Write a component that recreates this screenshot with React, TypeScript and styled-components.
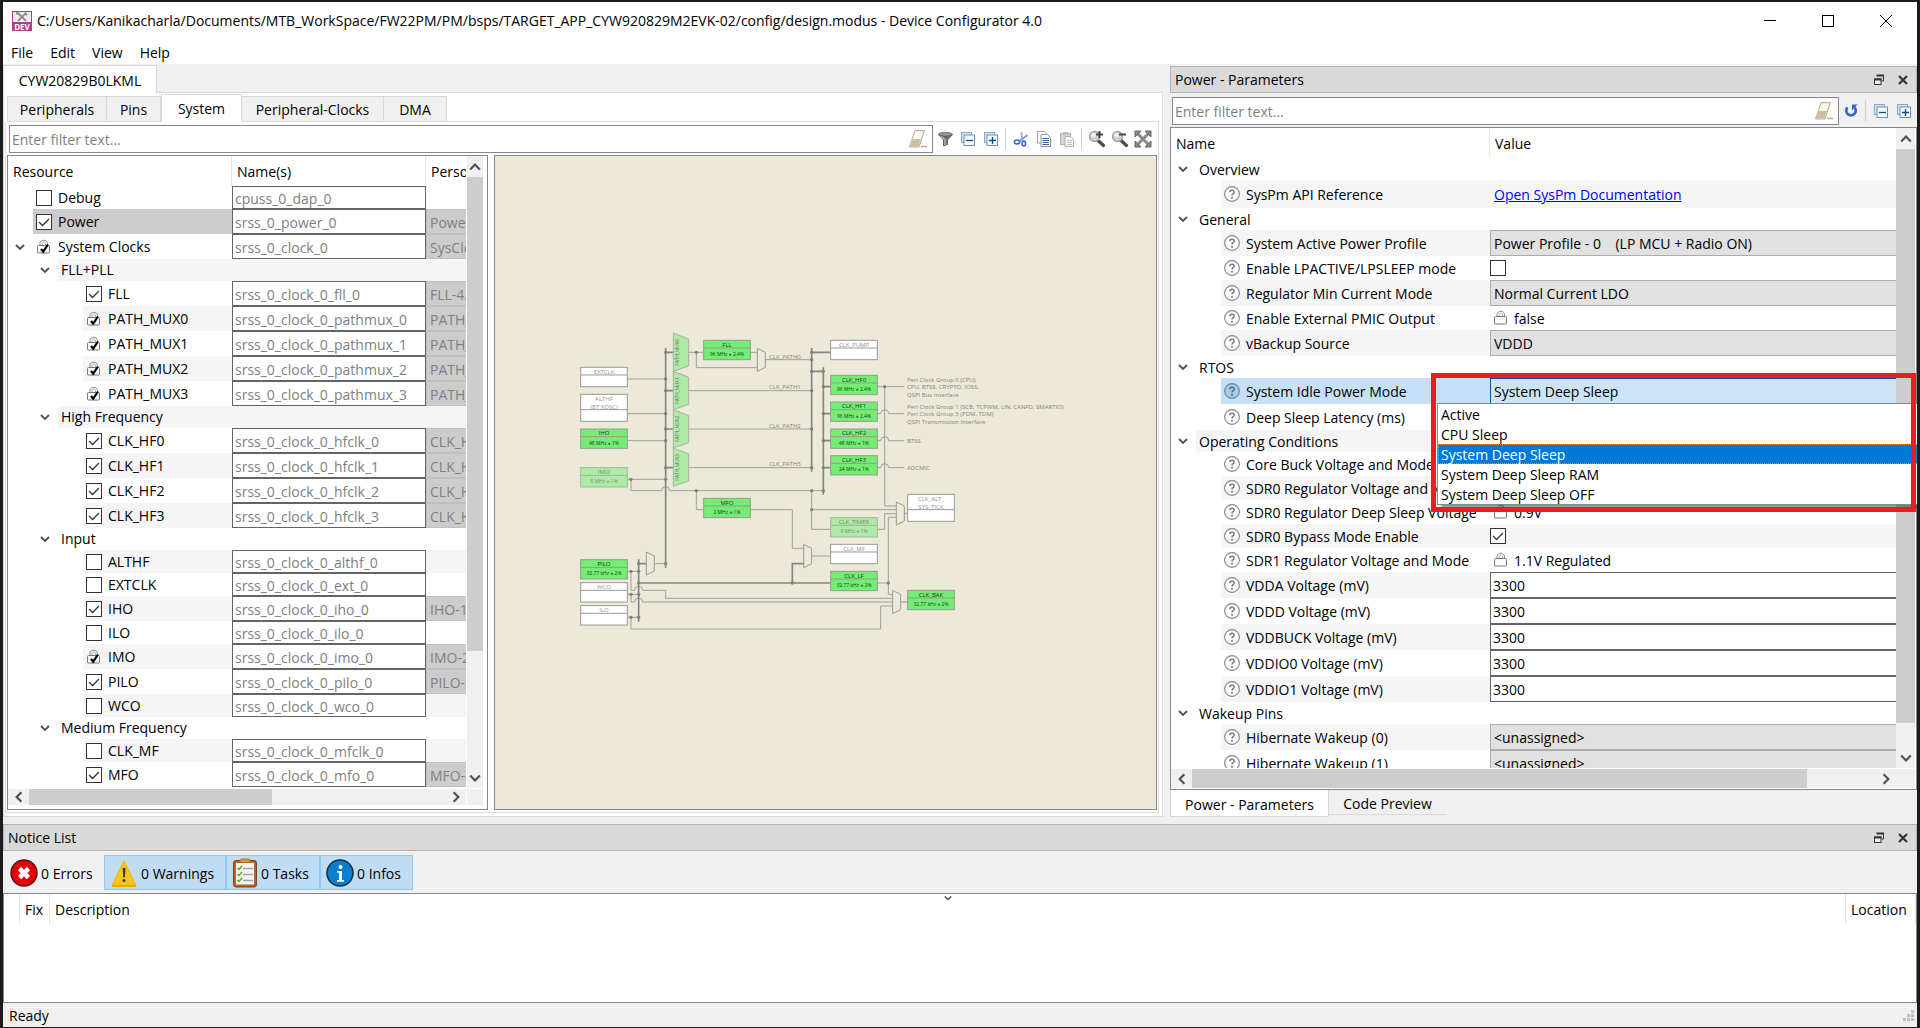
import React from "react";
import styled, { createGlobalStyle, css } from "styled-components";

const Global = createGlobalStyle`
  *, *::before, *::after { box-sizing: border-box; }
  body { margin: 0; background: #1b1b1b; }
  body, button, input, select {
    font-family: "Open Sans", "Noto Sans", sans-serif;
    font-size: 14px;
    line-height: 20px;
    color: #000;
  }
  button { background: none; border: 0; padding: 0; margin: 0; }
  ul { list-style: none; margin: 0; padding: 0; }
`;

const c = {
  face: "#f0f0f0",
  line: "#d9d9d9",
  frame: "#828790",
  title: "#d9d9d9",
  titleLine: "#b4b4b4",
  alt: "#f5f5f5",
  field: "#646464",
  thumb: "#cdcdcd",
};

/* ---------- window shell ---------- */

const Shell = styled.div`
  height: 100vh;
  display: flex;
  flex-direction: column;
  background: ${c.face};
  border: solid #1b1b1b;
  border-width: 2px 3px 1px;
  overflow: hidden;
`;

const TitleBar = styled.header`
  display: flex;
  align-items: center;
  height: 38px;
  padding: 0 2px 0 9px;
  background: #fff;
`;

const TitleText = styled.h1`
  flex: 1;
  margin: 0 0 0 5px;
  font-size: 14px;
  font-weight: 400;
  line-height: 20px;
  white-space: nowrap;
`;

const CaptionButton = styled.button`
  width: 58px;
  height: 36px;
  display: grid;
  place-items: center;
`;

const MenuBar = styled.nav`
  display: flex;
  height: 24px;
  gap: 17px;
  padding-left: 8px;
  background: #fff;
`;

const MenuButton = styled.button`
  height: 24px;
  padding-top: 2px;
`;

const Workspace = styled.main`
  flex: 1;
  min-height: 0;
  display: grid;
  grid-template-columns: minmax(0, 1160fr) minmax(0, 747fr);
  column-gap: 7px;
`;

/* ---------- left side ---------- */

const Column = styled.section`
  display: flex;
  flex-direction: column;
  min-height: 0;
  min-width: 0;
`;

const DeviceStrip = styled.div`
  display: flex;
  height: 29px;
  padding-top: 1px;
`;

const DeviceTab = styled.button`
  width: 154px;
  padding-top: 2px;
  background: #fff;
  border: solid ${c.line};
  border-width: 1px 1px 0 1px;
`;

const StripRule = styled.div`
  flex: 1;
  border-bottom: 1px solid ${c.line};
`;

const DevicePage = styled.div`
  flex: 1;
  min-height: 0;
  display: flex;
  flex-direction: column;
  padding: 1px 3px 3px 1px;
  background: #fff;
  border: solid ${c.line};
  border-width: 0 1px 1px;
`;

const TabStrip = styled.div`
  display: flex;
  align-items: flex-end;
  height: 28px;
  padding-left: 2px;
`;

const Tab = styled.button<{ $w: number; $active?: boolean }>`
  width: ${(p) => p.$w}px;
  height: ${(p) => (p.$active ? 28 : 26)}px;
  padding-top: 2px;
  background: ${(p) => (p.$active ? "#fff" : c.face)};
  border: 1px solid ${c.line};
  border-left-width: ${(p) => (p.$active ? 1 : 0)}px;
  ${(p) => p.$active && "border-bottom-color: #fff;"}
  &:first-child { border-left-width: 1px; }
`;

const Pane = styled.div`
  flex: 1;
  min-height: 0;
  display: flex;
  flex-direction: column;
  gap: 2px;
  padding: 3px 1px 2px;
  border: 1px solid ${c.line};
  border-top-width: 0;
`;

const ToolRow = styled.div`
  display: flex;
  align-items: center;
  height: 28px;
  padding: 0 3px 0 2px;
`;

const FilterBox = styled.div`
  flex: 1;
  display: flex;
  align-items: center;
  height: 28px;
  padding-right: 4px;
  background: #fff;
  border: 1px solid ${c.frame};
`;

const FilterInput = styled.input`
  flex: 1;
  border: 0;
  outline: 0;
  padding: 2px 2px 0;
  background: transparent;
  &::placeholder { color: #7f7f7f; opacity: 1; }
`;

const ToolButton = styled.button`
  width: 23px;
  height: 24px;
  display: grid;
  place-items: center;
`;

const ToolRule = styled.span`
  width: 1px;
  height: 22px;
  margin: 0 3px;
  background: #d0d0d0;
`;

const Split = styled.div`
  flex: 1;
  min-height: 0;
  display: grid;
  grid-template-columns: 481px minmax(0, 1fr);
  column-gap: 6px;
`;

const TreeFrame = styled.div`
  display: grid;
  grid-template: minmax(0, 1fr) 16px / minmax(0, 1fr) 16px;
  column-gap: 1px;
  row-gap: 1px;
  padding: 0 4px 4px 0;
  background: #fff;
  border: 1px solid ${c.frame};
  min-height: 0;
`;

const Viewport = styled.div`
  overflow: hidden;
  min-height: 0;
`;

const ScrollTrack = styled.div<{ $row?: boolean }>`
  display: flex;
  flex-direction: ${(p) => (p.$row ? "row" : "column")};
  background: ${c.face};
`;

const ScrollButton = styled.button`
  flex: 0 0 21px;
  display: grid;
  place-items: center;
`;

const Thumb = styled.div<{ $grow: number }>`
  flex: ${(p) => p.$grow};
  background: ${c.thumb};
`;

const TrackRest = styled.div<{ $grow: number }>`
  flex: ${(p) => p.$grow};
`;

const Corner = styled.div`
  background: ${c.face};
`;

/* ---------- shared tables ---------- */

const Grid = styled.table`
  width: 100%;
  table-layout: fixed;
  border-collapse: separate;
  border-spacing: 0;
  td, th { padding: 0; white-space: nowrap; overflow: hidden; }
`;

const HeadCell = styled.th<{ $h: number; $rule?: boolean }>`
  height: ${(p) => p.$h}px;
  && { padding: 2px 0 0 5px; }
  text-align: left;
  font-weight: 400;
  border-right: ${(p) => (p.$rule ? "1px solid #e5e5e5" : "0")};
`;

const BodyRow = styled.tr<{ $h: number }>`
  height: ${(p) => p.$h}px;
  td { height: ${(p) => p.$h}px; }
`;

const BodyCell = styled.td<{ $bg?: string }>`
  background: ${(p) => p.$bg ?? "transparent"};
  vertical-align: middle;
`;

const Branch = styled.div<{ $h: number; $depth: number }>`
  display: flex;
  height: ${(p) => p.$h}px;
  padding-left: ${(p) => p.$depth * 25}px;
`;

const Toggle = styled.button`
  width: 25px;
  padding-right: 2px;
  display: grid;
  place-items: center;
`;

const ItemLabel = styled.label<{ $bg?: string }>`
  flex: 1;
  display: flex;
  align-items: center;
  gap: 6px;
  padding-left: 3px;
  background: ${(p) => p.$bg ?? "transparent"};
`;

const ParamText = styled.span`
  padding-top: 2px;
`;

const tick = `url("data:image/svg+xml,%3Csvg xmlns='http://www.w3.org/2000/svg' width='14' height='14'%3E%3Cpath d='M2 7l3.5 3.5L12 4' fill='none' stroke='%23333' stroke-width='1.3'/%3E%3C/svg%3E")`;

const CheckBox = styled.input`
  appearance: none;
  flex: none;
  width: 16px;
  height: 16px;
  margin: 0;
  background: #fff;
  border: 1px solid #333;
  &:checked { background: #fff ${tick} center no-repeat; }
`;

const NameField = styled.input<{ $h: number }>`
  display: block;
  width: 100%;
  height: ${(p) => p.$h}px;
  padding: 2px 0 0 2px;
  border: 1px solid ${c.field};
  border-radius: 0;
  color: #808080;
  background: #fff;
`;

const Persona = styled.div<{ $h: number }>`
  height: ${(p) => p.$h}px;
  padding: 3px 0 0 3px;
  color: #808080;
  background: #ccc;
  border: solid #bfbfbf;
  border-width: 1px 0 1px 1px;
  overflow: hidden;
`;

const Canvas = styled.div`
  display: flex;
  align-items: center;
  justify-content: center;
  background: #ece9d8;
  border: 1px solid ${c.frame};
  overflow: hidden;
  min-height: 0;
`;

/* ---------- docks ---------- */

const Dock = styled(Column).attrs({ as: "aside" })`
  position: relative;
  padding-top: 2px;
`;

const DockTitle = styled.div`
  display: flex;
  align-items: center;
  height: 27px;
  flex: none;
  padding: 0 2px 0 4px;
  background: ${c.title};
  border: 1px solid ${c.titleLine};
`;

const DockName = styled.h2`
  flex: 1;
  margin: 0;
  padding-top: 1px;
  font-size: 14px;
  line-height: 20px;
  font-weight: 400;
`;

const DockButton = styled.button`
  width: 26px;
  height: 22px;
  display: grid;
  place-items: center;
  &:last-child { width: 22px; }
`;

const ParamTools = styled(ToolRow)`
  height: 34px;
  padding: 4px 2px 2px;
`;

const ParamFrame = styled.div`
  flex: 1;
  min-height: 0;
  display: grid;
  grid-template: minmax(0, 1fr) 19px / minmax(0, 1fr) 19px;
  row-gap: 1px;
  padding: 0 1px 1px 0;
  background: #fff;
  border: 1px solid ${c.frame};
`;

const ParamTabs = styled.div`
  display: flex;
  align-items: flex-start;
  height: 27px;
`;

const ParamTab = styled.button<{ $w: number; $active?: boolean }>`
  width: ${(p) => p.$w}px;
  height: ${(p) => (p.$active ? 27 : 25)}px;
  padding-top: 3px;
  background: ${(p) => (p.$active ? "#fff" : c.face)};
  border: solid ${c.line};
  border-width: ${(p) => (p.$active ? "0 1px 1px" : "0 0 1px")};
`;

const ValueSelect = styled.select<{ $active?: boolean }>`
  appearance: none;
  display: block;
  width: 100%;
  height: 26px;
  padding: 2px 0 0 3px;
  border: solid ${(p) => (p.$active ? "#005499" : "#adadad")};
  border-width: 1px 0 1px 1px;
  border-radius: 0;
  outline: 0;
  background: ${(p) => (p.$active ? "#cce4f7" : "#e1e1e1")};
`;

const ValueInput = styled.input`
  display: block;
  width: 100%;
  height: 26px;
  padding: 1px 0 0 2px;
  border: solid ${c.field};
  border-width: 1px 0 1px 1px;
  border-radius: 0;
`;

const ValueText = styled.output`
  display: flex;
  align-items: center;
  gap: 5px;
  padding-left: 3px;
`;

const DocLink = styled.a`
  display: inline-block;
  padding: 2px 0 0 4px;
  color: #00f;
  text-decoration: underline;
`;

const Popup = styled.ul`
  position: absolute;
  top: 339px;
  left: 267px;
  right: -3px;
  border: 1px solid ${c.frame};
  background: #fff;
  box-shadow: 4px 4px 3px rgba(0, 0, 0, 0.4);
`;

const PopupItem = styled.li<{ $active?: boolean }>`
  height: 20px;
  padding-left: 2px;
  border: 1px solid transparent;
  line-height: 20px;
  ${(p) =>
    p.$active &&
    css`
      color: #fff;
      background: #0078d7;
      border: 1px dotted #ff8728;
    `}
`;

const Highlight = styled.div`
  position: absolute;
  top: 309px;
  left: 261px;
  right: 1px;
  height: 139px;
  border: 5px solid #ed1c24;
  pointer-events: none;
`;

const NoticeDock = styled.section`
  flex: none;
  margin-top: 7px;
  display: flex;
  flex-direction: column;
`;

const NoticeTools = styled.div`
  display: flex;
  align-items: flex-start;
  height: 42px;
  padding: 4px 0 0 1px;
`;

const NoticeToggle = styled.button<{ $on?: boolean; $w: number }>`
  display: flex;
  align-items: center;
  gap: 3px;
  width: ${(p) => p.$w}px;
  height: 35px;
  padding-left: 5px;
  border: 1px solid ${(p) => (p.$on ? "#90c8f6" : "transparent")};
  background: ${(p) => (p.$on ? "#c0dcf3" : "transparent")};
`;

const NoticeLabel = styled.span`
  padding-top: 2px;
`;

const NoticeFrame = styled.div`
  height: 110px;
  background: #fff;
  border: 1px solid ${c.frame};
`;

const SortHead = styled(HeadCell)`
  position: relative;
`;

const SortMark = styled.span`
  position: absolute;
  top: 0;
  left: 50%;
  margin-left: -4px;
  display: grid;
  height: 8px;
  place-items: center;
`;

const StatusBar = styled.footer`
  display: flex;
  justify-content: space-between;
  align-items: center;
  height: 24px;
  padding: 1px 3px 0 6px;
  flex: none;
`;

/* ---------- icons ---------- */

const Chevron = ({ dir = "down", s = 10 }: { dir?: "down" | "up" | "left" | "right"; s?: number }) => {
  const turn = { down: 0, left: 90, up: 180, right: 270 }[dir];
  return (
    <svg width={s} height={s} viewBox="0 0 10 10" aria-hidden="true">
      <path d="M1 3l4 4 4-4" fill="none" stroke="#505050" strokeWidth="1.800" transform={`rotate(${turn} 5 5)`} />
    </svg>
  );
};

const DevIcon = () => (
  <svg width="20" height="20" viewBox="0 0 20 20" aria-hidden="true">
    <rect x="0.5" y="0.5" width="19" height="19" fill="#f3eef2" stroke="#b8398a" />
    <path d="M6 2l8 8M14 2l-8 8" stroke="#8d8d8d" strokeWidth="1.800" />
    <path d="M4 2l2 .5M5 3.500l1-2M13 2l2 2" stroke="#777" strokeWidth="1.500" />
    <rect y="11" width="20" height="9" fill="#b8398a" />
    <text x="10" y="18.500" textAnchor="middle" fontSize="8" fontWeight="700" fill="#fff" fontFamily="Open Sans">DEV</text>
  </svg>
);

const Eraser = () => (
  <svg width="20" height="20" viewBox="0 0 20 20" aria-hidden="true">
    <path d="M7 1.500h9.500L11 18H1.500z" fill="#e9dfd0" stroke="#c0ae98" />
    <path d="M7.500 2.500h7.600l-2.600 7.500H5z" fill="#faf6f0" />
    <path d="M4.500 10h8L10.500 17H2.500z" fill="#cdbca6" />
    <path d="M13 17.500h6" stroke="#c0ae98" strokeWidth="1.500" />
  </svg>
);

const Funnel = () => (
  <svg width="16" height="16" viewBox="0 0 16 16" aria-hidden="true">
    <path d="M1.500 3.500L6.500 9v6l4-1.500V9l5-5.500z" fill="#6c6c6c" stroke="#484848" strokeWidth=".7" />
    <path d="M4 5l4 4v5" fill="none" stroke="#b5b5b5" strokeWidth="1.500" />
    <ellipse cx="8.300" cy="3.200" rx="6.800" ry="1.800" fill="#999" stroke="#5a5a5a" strokeWidth=".8" />
  </svg>
);

const Squares = ({ plus }: { plus?: boolean }) => (
  <svg width="16" height="16" viewBox="0 0 16 16" aria-hidden="true">
    <rect x="1.500" y="1.500" width="10" height="10" fill="#cfe3f5" stroke="#82abd2" />
    <rect x="4" y="4" width="10.500" height="10.500" fill="#f5faff" stroke="#6f8fb8" />
    <path d={plus ? "M6 9.500h7M9.500 6v7" : "M6 9.500h7"} stroke="#0a4a94" strokeWidth="1.300" />
  </svg>
);

const Cut = () => (
  <svg width="16" height="16" viewBox="0 0 16 16" aria-hidden="true">
    <path d="M8.500 1l.6 8.500" stroke="#9db4d2" strokeWidth="1.800" />
    <path d="M14.500 4L6 10.500" stroke="#7f9cc6" strokeWidth="1.800" />
    <ellipse cx="4" cy="11" rx="2.600" ry="1.900" fill="none" stroke="#2f66c6" strokeWidth="1.500" />
    <ellipse cx="10.800" cy="12.500" rx="1.700" ry="2.500" fill="none" stroke="#2f66c6" strokeWidth="1.500" />
  </svg>
);

const Copy = () => (
  <svg width="16" height="16" viewBox="0 0 16 16" aria-hidden="true">
    <path d="M1.500 .5h7l2 2v9.500h-9z" fill="#fff" stroke="#a5a5a5" />
    <path d="M5 3.500h6.500l3 3v9H5z" fill="#fff" stroke="#959595" />
    <path d="M6.500 7.500h6.500M6.500 9.500h6.500M6.500 11.500h6.500M6.500 13.500h6.500" stroke="#3a5cab" />
  </svg>
);

const Paste = () => (
  <svg width="16" height="16" viewBox="0 0 16 16" aria-hidden="true">
    <rect x="1.500" y="2.500" width="10" height="11" fill="#d5d5d5" stroke="#b0b0b0" />
    <rect x="4" y="1" width="5" height="3" fill="#bdbdbd" />
    <path d="M6 5.500h5.500l3 3v7H6z" fill="#f6f6f6" stroke="#b0b0b0" />
    <path d="M8 9.500h5M8 11.500h5M8 13.500h5" stroke="#c2c2c2" />
  </svg>
);

const Magnifier = ({ plus }: { plus?: boolean }) => (
  <svg width="18" height="18" viewBox="0 0 18 18" aria-hidden="true">
    <path d="M9.500 10l6 5.500" stroke="#4a4a4a" strokeWidth="3.200" strokeLinecap="round" />
    <circle cx="6.500" cy="6.500" r="5" fill="#cfcfcf" stroke="#a2a2a2" strokeWidth="1.300" />
    <circle cx="5.500" cy="5" r="2.300" fill="#f0f0f0" />
    <path d={plus ? "M8 4.500h7M11.500 1v7" : "M8 4.500h7"} stroke="#444" strokeWidth="2" />
  </svg>
);

const Fit = () => (
  <svg width="18" height="18" viewBox="0 0 18 18" aria-hidden="true">
    <path d="M3 3l12 12M15 3L3 15" stroke="#8a8a8a" strokeWidth="3" />
    <path d="M1 1h6L1 7zM17 1v6L11 1zM1 17v-6l6 6zM17 17h-6l6-6z" fill="#8a8a8a" stroke="#666" />
  </svg>
);

const Refresh = () => (
  <svg width="16" height="16" viewBox="0 0 16 16" aria-hidden="true">
    <path d="M4.500 4.500a4.700 4.700 0 1 0 7 0" fill="none" stroke="#3468c8" strokeWidth="2.800" />
    <path d="M9 1.500h5.500L9 7.500z" fill="#3468c8" />
  </svg>
);

const Float = () => (
  <svg width="12" height="12" viewBox="0 0 12 12" aria-hidden="true">
    <path d="M4 1.500h6.500V7H8.500" fill="none" stroke="#333" />
    <path d="M3.500 1.500h7.500" stroke="#333" strokeWidth="2" />
    <rect x="1.500" y="5" width="6.500" height="5.500" fill="#eee" stroke="#333" />
    <path d="M1 5.500h7.500" stroke="#333" strokeWidth="2" />
  </svg>
);

const Cross = () => (
  <svg width="12" height="12" viewBox="0 0 12 12" aria-hidden="true">
    <path d="M2 2l8 8M10 2L2 10" stroke="#333" strokeWidth="2.200" />
  </svg>
);

const Lock = ({ ticked }: { ticked?: boolean }) => (
  <svg width="16" height="16" viewBox="0 0 16 16" aria-hidden="true">
    <path d="M4 6.500V4.500C4 .2 11.500 .2 11.500 4.500V6.500" fill="none" stroke="#8a8a8a" />
    <path d="M6 6.500V4.800c0-2.400 3.500-2.400 3.500 0v1.700" fill="none" stroke="#aaa" />
    <rect x="1.500" y="6.500" width="12" height="7.500" rx="1" fill="#fcfcfc" stroke="#777" />
    {ticked && <path d="M5 10l2.200 2.700L12 5.500" fill="none" stroke="#000" strokeWidth="2.200" />}
  </svg>
);

const Help = ({ active }: { active?: boolean }) => (
  <svg width="16" height="16" viewBox="0 0 16 16" aria-hidden="true">
    <circle cx="8" cy="8" r="7.400" fill={active ? "#a9cbe8" : "#fff"} stroke={active ? "#5f87a8" : "#858585"} strokeWidth="1.100" />
    <path d="M5.800 6.300C5.900 3.600 10.200 3.700 10.200 6.200 10.200 7.700 8 7.700 8 9.400" fill="none" stroke={active ? "#41698c" : "#777"} strokeWidth="1.500" />
    <circle cx="8" cy="11.700" r="1" fill={active ? "#41698c" : "#777"} />
  </svg>
);

const ErrorIcon = () => (
  <svg width="28" height="28" viewBox="0 0 28 28" aria-hidden="true">
    <circle cx="14" cy="14" r="13" fill="#e3000b" stroke="#5b1010" strokeWidth="1.400" />
    <path d="M9.500 9.500l9 9M18.500 9.500l-9 9" stroke="#fff" strokeWidth="4.600" />
  </svg>
);

const WarningIcon = () => (
  <svg width="28" height="30" viewBox="0 0 28 30" aria-hidden="true">
    <path d="M14 2.500L26 27q.5 1.500-1 1.500H3q-1.500 0-1-1.500z" fill="#f5c518" stroke="#f0b90b" strokeLinejoin="round" />
    <path d="M2 27h24v1.500H2z" fill="#e79b12" />
    <path d="M12.700 10h2.800l-.6 9.500h-1.600z" fill="#3c3c3c" />
    <circle cx="14" cy="22.500" r="1.500" fill="#3c3c3c" />
  </svg>
);

const TaskIcon = () => (
  <svg width="26" height="30" viewBox="0 0 26 30" aria-hidden="true">
    <rect x="1.500" y="2.500" width="23" height="26.500" rx="2.500" fill="#b5652b" stroke="#7d4218" />
    <rect x="4" y="5" width="18" height="21.500" fill="#f4f4f2" />
    <rect x="8" y="1" width="10" height="3.500" rx="1.500" fill="#e0953e" stroke="#9a5a20" strokeWidth=".7" />
    <path d="M5.500 10l1.500 1.500L10 8M5.500 16l1.500 1.500L10 14M5.500 22l1.500 1.500L10 20" fill="none" stroke="#5aa52a" strokeWidth="1.500" />
    <path d="M11 10.500h10M11 16.500h10M11 22.500h10" stroke="#a5a5a5" strokeWidth="1.500" />
  </svg>
);

const InfoIcon = () => (
  <svg width="28" height="28" viewBox="0 0 28 28" aria-hidden="true">
    <circle cx="14" cy="14" r="13" fill="#0a7fcb" stroke="#12324a" strokeWidth="1.600" />
    <circle cx="14.500" cy="8" r="2" fill="#fff" />
    <path d="M11 12h5v9h2v1.800h-7V21h2v-7.200h-2z" fill="#fff" />
  </svg>
);

const Grip = () => (
  <svg width="11" height="11" viewBox="0 0 11 11" aria-hidden="true">
    <path d="M8 0h3v3H8zM8 4h3v3H8zM4 4h3v3H4zM8 8h3v3H8zM4 8h3v3H4zM0 8h3v3H0z" fill="#bfbfbf" />
  </svg>
);

/* ---------- clock diagram ---------- */

type Block = { x: number; y: number; name: string[]; freq?: string; dim?: boolean };

const blocks: Block[] = [
  { x: 62, y: 142, name: ["EXTCLK"] },
  { x: 62, y: 223, name: ["ALTHF", "(BT XOSC)"] },
  { x: 62, y: 327, name: ["IHO"], freq: "48 MHz ± 1%" },
  { x: 62, y: 443, name: ["IMO"], freq: "8 MHz ± 1%", dim: true },
  { x: 62, y: 719, name: ["PILO"], freq: "32.77 kHz ± 2%" },
  { x: 62, y: 788, name: ["WCO"] },
  { x: 62, y: 857, name: ["ILO"] },
  { x: 431, y: 61, name: ["FLL"], freq: "96 MHz ± 2.4%" },
  { x: 431, y: 535, name: ["MFO"], freq: "2 MHz ± 1%" },
  { x: 812, y: 61, name: ["CLK_PUMP"] },
  { x: 812, y: 166, name: ["CLK_HF0"], freq: "96 MHz ± 2.4%" },
  { x: 812, y: 246, name: ["CLK_HF1"], freq: "96 MHz ± 2.4%" },
  { x: 812, y: 327, name: ["CLK_HF2"], freq: "48 MHz ± 1%" },
  { x: 812, y: 407, name: ["CLK_HF3"], freq: "24 MHz ± 1%" },
  { x: 812, y: 593, name: ["CLK_TIMER"], freq: "8 MHz ± 1%", dim: true },
  { x: 812, y: 673, name: ["CLK_MF"] },
  { x: 812, y: 754, name: ["CLK_LF"], freq: "32.77 kHz ± 2%" },
  { x: 1043, y: 523, name: ["CLK_ALT_", "SYS_TICK"] },
  { x: 1043, y: 811, name: ["CLK_BAK"], freq: "32.77 kHz ± 2%" },
];

const thinWires = [
  "M202 177H317M202 281H317M202 362H317M202 478H317",
  "M213 478V512H305A12 12 0 0 1 329 512H790M409 512V569H431M571 569H697V685H732M755 708H812",
  "M386 97H431M409 97V143H592M571 97H592M617 119H755M386 212H755M386 327H755M386 443H755",
  "M952 200H1033M974 200V558H1009",
  "M952 281H962A12 12 0 0 1 986 281H1033M952 362H962A12 12 0 0 1 986 362H1033M952 443H962A12 12 0 0 1 986 443H1033",
  "M755 512V628H812M755 569H1009M952 628H974V581H1009M1009 592H985V823H998M952 789H985M1033 580H1043M1021 846H1043",
  "M202 754H236M213 754V811H224A12 12 0 0 1 248 811H317V835H998",
  "M202 823H236M213 823V846H224A12 12 0 0 1 248 846H998",
  "M202 892H236M213 892V927H962V858H998M284 731H317",
].join("");

const thickWires =
  "M317 84V743M236 718V905M755 84V455M790 142V524M317 97H340M317 212H340M317 327H340M317 443H340M755 97H812M755 154H790M790 200H812M790 281H812M790 362H812M790 443H812M236 789H812M697 789V731H732M236 731H259";

const joints: [number, number][] = [
  [317, 97], [317, 177], [317, 212], [317, 281], [317, 327], [317, 362], [317, 443], [317, 478], [317, 731],
  [213, 478], [409, 97], [409, 512], [755, 97], [755, 119], [755, 154], [755, 212], [755, 327], [755, 443],
  [790, 154], [790, 200], [790, 281], [790, 362], [790, 443], [790, 512], [755, 512], [755, 569], [974, 200],
  [697, 789], [985, 789], [213, 754], [236, 754], [213, 823], [236, 823], [213, 892], [236, 892], [236, 731], [236, 789],
];

const muxes: [number, number, number][] = [
  [592, 85, 69],
  [731, 673, 70],
  [1009, 546, 69],
  [998, 811, 70],
  [259, 696, 69],
];

const notes: [number, number, string][] = [
  [627, 116, "CLK_PATH0"],
  [627, 207, "CLK_PATH1"],
  [627, 323, "CLK_PATH2"],
  [627, 438, "CLK_PATH3"],
  [1041, 186, "Peri Clock Group 0 (CPU)"],
  [1041, 207, "CPU, BTSS, CRYPTO, IOSS,"],
  [1041, 231, "QSPI Bus Interface"],
  [1041, 266, "Peri Clock Group 1 (SCB, TCPWM, LIN, CANFD, SMARTIO)"],
  [1041, 288, "Peri Clock Group 3 (PDM, TDM)"],
  [1041, 312, "QSPI Transmission Interface"],
  [1041, 368, "BTSS"],
  [1041, 449, "ADCMIC"],
];

const DiagramSvg = styled.svg`
  flex: none;
  font-family: "Open Sans", sans-serif;
  font-size: 18px;
`;

const ClockDiagram = () => (
  <DiagramSvg width="520" height="320" viewBox="18 9 1560 960" role="img" aria-label="Clock diagram">
    <path d={thinWires} fill="none" stroke="#a09f98" strokeWidth="3" />
    <path d={thickWires} fill="none" stroke="#858585" strokeWidth="5" />
    {joints.map(([x, y]) => (
      <circle key={`${x}-${y}`} cx={x} cy={y} r="5" fill="#808080" />
    ))}
    {muxes.map(([x, y, h]) => (
      <path
        key={`${x}-${y}`}
        d={`M${x} ${y}l24 12V${y + h - 12}L${x} ${y + h}z`}
        fill="#ece9d8"
        stroke="#9a9a96"
        strokeWidth="3"
      />
    ))}
    {[0, 1, 2, 3].map((i) => (
      <g key={i} transform={`translate(340 ${39 + i * 115})`}>
        <path d="M0 0l46 18v81L0 115z" fill="#aeeba6" stroke="#a3b59e" strokeWidth="3" />
        <text transform="translate(17 58) rotate(-90)" textAnchor="middle" fontSize="14" fill="#5f705c">
          {`PATH_MUX${i}`}
        </text>
      </g>
    ))}
    {blocks.map((b) => {
      const two = b.name.length > 1;
      const h = two ? 81 : 58;
      const top = two ? 46 : 23;
      const fill = b.dim ? "#aeeba6" : b.freq ? "#73ee73" : "#fff";
      const ink = b.dim ? "#748f70" : b.freq ? "#163a16" : "#969090";
      return (
        <g key={b.name[0]} transform={`translate(${b.x} ${b.y})`}>
          <rect width="140" height={h} fill={fill} stroke={b.dim ? "#a3b59e" : "#999"} strokeWidth="3" />
          <path d={`M0 ${top}h140`} stroke={b.dim ? "#a3b59e" : "#999"} strokeWidth="3" />
          {b.name.map((line, i) => (
            <text key={line} x="70" y={19 + i * 24} textAnchor="middle" fill={ink}>
              {line}
            </text>
          ))}
          {b.freq && (
            <text x="70" y="47" textAnchor="middle" fontSize="15" fill={ink}>
              {b.freq}
            </text>
          )}
        </g>
      );
    })}
    {notes.map(([x, y, t]) => (
      <text key={t} x={x} y={y} fill="#83827c">
        {t}
      </text>
    ))}
  </DiagramSvg>
);

/* ---------- resource tree ---------- */

type Res = {
  depth: number;
  label: string;
  kind: "check" | "lock" | "group";
  on?: boolean;
  open?: boolean;
  name?: string;
  persona?: string;
  shade?: boolean;
  selected?: boolean;
};

const leaf = (label: string, name: string, persona: string, shade: boolean, kind: Res["kind"] = "check"): Res => ({
  depth: 2,
  label,
  kind,
  on: persona !== "",
  name: `srss_0_clock_0_${name}`,
  persona,
  shade,
});

const group = (label: string, shade: boolean): Res => ({ depth: 1, label, kind: "group", open: true, shade });

const resources: Res[] = [
  { depth: 0, label: "Debug", kind: "check", name: "cpuss_0_dap_0" },
  { depth: 0, label: "Power", kind: "check", on: true, name: "srss_0_power_0", persona: "Power-1.4", selected: true },
  { depth: 0, label: "System Clocks", kind: "lock", open: true, name: "srss_0_clock_0", persona: "SysClocks-4.0" },
  group("FLL+PLL", true),
  leaf("FLL", "fll_0", "FLL-4.0", false),
  leaf("PATH_MUX0", "pathmux_0", "PATH_MUX-4.0", true, "lock"),
  leaf("PATH_MUX1", "pathmux_1", "PATH_MUX-4.0", false, "lock"),
  leaf("PATH_MUX2", "pathmux_2", "PATH_MUX-4.0", true, "lock"),
  leaf("PATH_MUX3", "pathmux_3", "PATH_MUX-4.0", false, "lock"),
  group("High Frequency", true),
  leaf("CLK_HF0", "hfclk_0", "CLK_HF-4.0", false),
  leaf("CLK_HF1", "hfclk_1", "CLK_HF-4.0", true),
  leaf("CLK_HF2", "hfclk_2", "CLK_HF-4.0", false),
  leaf("CLK_HF3", "hfclk_3", "CLK_HF-4.0", true),
  group("Input", false),
  leaf("ALTHF", "althf_0", "", true),
  leaf("EXTCLK", "ext_0", "", false),
  leaf("IHO", "iho_0", "IHO-1.0", true),
  leaf("ILO", "ilo_0", "", false),
  leaf("IMO", "imo_0", "IMO-2.0", true, "lock"),
  leaf("PILO", "pilo_0", "PILO-3.0", false),
  leaf("WCO", "wco_0", "", true),
  group("Medium Frequency", false),
  leaf("CLK_MF", "mfclk_0", "", true),
  leaf("MFO", "mfo_0", "MFO-1.0", false),
];

const ResourceRow = ({ r }: { r: Res }) => {
  const h = r.kind === "group" ? 22 : r.persona ? 25 : 23;
  const bg = r.selected ? "#cdcdcd" : r.shade ? c.alt : undefined;
  const label = (
    <Branch $h={h} $depth={r.depth}>
      {r.open ? (
        <Toggle aria-label={`Collapse ${r.label}`}>
          <Chevron />
        </Toggle>
      ) : (
        <Toggle as="span" />
      )}
      <ItemLabel $bg={bg} as={r.kind === "check" ? "label" : "div"}>
        {r.kind === "check" && <CheckBox type="checkbox" defaultChecked={r.on} />}
        {r.kind === "lock" && <Lock ticked />}
        <span>{r.label}</span>
      </ItemLabel>
    </Branch>
  );
  if (r.kind === "group")
    return (
      <BodyRow $h={h}>
        <BodyCell>{label}</BodyCell>
        <BodyCell colSpan={2} $bg={bg} />
      </BodyRow>
    );
  return (
    <BodyRow $h={h}>
      <BodyCell>{label}</BodyCell>
      <BodyCell>
        <NameField $h={h} aria-label={`${r.label} name`} defaultValue={r.name} />
      </BodyCell>
      <BodyCell $bg={r.selected ? undefined : bg}>{r.persona && <Persona $h={h}>{r.persona}</Persona>}</BodyCell>
    </BodyRow>
  );
};

/* ---------- parameters ---------- */

type Param = {
  label: string;
  kind: "group" | "link" | "select" | "check" | "fixed" | "text";
  value?: string;
  on?: boolean;
  h: number;
  active?: boolean;
};

const params: Param[] = [
  { label: "Overview", kind: "group", h: 23 },
  { label: "SysPm API Reference", kind: "link", value: "Open SysPm Documentation", h: 28 },
  { label: "General", kind: "group", h: 22 },
  { label: "System Active Power Profile", kind: "select", value: "Power Profile - 0\u00a0\u00a0\u00a0\u00a0(LP MCU + Radio ON)", h: 26 },
  { label: "Enable LPACTIVE/LPSLEEP mode", kind: "check", h: 24 },
  { label: "Regulator Min Current Mode", kind: "select", value: "Normal Current LDO", h: 26 },
  { label: "Enable External PMIC Output", kind: "fixed", value: "false", h: 24 },
  { label: "vBackup Source", kind: "select", value: "VDDD", h: 26 },
  { label: "RTOS", kind: "group", h: 22 },
  { label: "System Idle Power Mode", kind: "select", value: "System Deep Sleep", h: 26, active: true },
  { label: "Deep Sleep Latency (ms)", kind: "text", value: "0", h: 26 },
  { label: "Operating Conditions", kind: "group", h: 22 },
  { label: "Core Buck Voltage and Mode", kind: "fixed", value: "", h: 24 },
  { label: "SDR0 Regulator Voltage and Mode", kind: "fixed", value: "", h: 24 },
  { label: "SDR0 Regulator Deep Sleep Voltage", kind: "fixed", value: "0.9V", h: 24 },
  { label: "SDR0 Bypass Mode Enable", kind: "check", on: true, h: 24 },
  { label: "SDR1 Regulator Voltage and Mode", kind: "fixed", value: "1.1V Regulated", h: 24 },
  { label: "VDDA Voltage (mV)", kind: "text", value: "3300", h: 26 },
  { label: "VDDD Voltage (mV)", kind: "text", value: "3300", h: 26 },
  { label: "VDDBUCK Voltage (mV)", kind: "text", value: "3300", h: 26 },
  { label: "VDDIO0 Voltage (mV)", kind: "text", value: "3300", h: 26 },
  { label: "VDDIO1 Voltage (mV)", kind: "text", value: "3300", h: 26 },
  { label: "Wakeup Pins", kind: "group", h: 22 },
  { label: "Hibernate Wakeup (0)", kind: "select", value: "<unassigned>", h: 26 },
  { label: "Hibernate Wakeup (1)", kind: "select", value: "<unassigned>", h: 26 },
];

const shadedParams = new Set([1, 3, 5, 7, 11, 13, 15, 17, 19, 21, 23]);

const ValueCheck = styled(CheckBox)`
  align-self: center;
`;

const ParamRow = ({ p, i }: { p: Param; i: number }) => {
  const bg = p.active ? "#c5e0f7" : shadedParams.has(i) ? c.alt : undefined;
  const id = `param-${i}`;
  if (p.kind === "group")
    return (
      <BodyRow $h={p.h}>
        <BodyCell>
          <Branch $h={p.h} $depth={0}>
            <Toggle aria-label={`Collapse ${p.label}`}>
              <Chevron />
            </Toggle>
            <ItemLabel as="div" $bg={bg}>
              <ParamText>{p.label}</ParamText>
            </ItemLabel>
          </Branch>
        </BodyCell>
        <BodyCell $bg={bg} />
      </BodyRow>
    );
  return (
    <BodyRow $h={p.h}>
      <BodyCell>
        <Branch $h={p.h} $depth={1}>
          <Toggle as="span" />
          <ItemLabel $bg={bg} htmlFor={id}>
            <Help active={p.active} />
            <ParamText>{p.label}</ParamText>
          </ItemLabel>
        </Branch>
      </BodyCell>
      <BodyCell $bg={bg}>
        {p.kind === "select" && (
          <ValueSelect id={id} $active={p.active}>
            <option>{p.value}</option>
          </ValueSelect>
        )}
        {p.kind === "text" && <ValueInput id={id} defaultValue={p.value} />}
        {p.kind === "link" && <DocLink id={id} href="#syspm">{p.value}</DocLink>}
        {p.kind === "check" && (
          <Branch $h={p.h} $depth={0}>
            <ValueCheck id={id} type="checkbox" defaultChecked={p.on} />
          </Branch>
        )}
        {p.kind === "fixed" && (
          <ValueText id={id}>
            <Lock />
            <ParamText>{p.value}</ParamText>
          </ValueText>
        )}
      </BodyCell>
    </BodyRow>
  );
};

const ScrollBar = ({ row, thumb, rest }: { row?: boolean; thumb: number; rest: number }) => (
  <ScrollTrack $row={row}>
    <ScrollButton aria-label="Scroll back">
      <Chevron dir={row ? "left" : "up"} s={12} />
    </ScrollButton>
    <Thumb $grow={thumb} />
    <TrackRest $grow={rest} />
    <ScrollButton aria-label="Scroll forward">
      <Chevron dir={row ? "right" : "down"} s={12} />
    </ScrollButton>
  </ScrollTrack>
);

const DockHeader = ({ name }: { name: string }) => (
  <DockTitle>
    <DockName>{name}</DockName>
    <DockButton aria-label="Float">
      <Float />
    </DockButton>
    <DockButton aria-label="Close panel">
      <Cross />
    </DockButton>
  </DockTitle>
);

const modes = ["Active", "CPU Sleep", "System Deep Sleep", "System Deep Sleep RAM", "System Deep Sleep OFF"];

export default function App() {
  return (
    <Shell>
      <Global />
      <TitleBar>
        <DevIcon />
        <TitleText>
          C:/Users/Kanikacharla/Documents/MTB_WorkSpace/FW22PM/PM/bsps/TARGET_APP_CYW920829M2EVK-02/config/design.modus - Device Configurator 4.0
        </TitleText>
        <CaptionButton aria-label="Minimize">
          <svg width="12" height="12"><path d="M0 5.500h12" stroke="#000" /></svg>
        </CaptionButton>
        <CaptionButton aria-label="Maximize">
          <svg width="12" height="12"><rect x=".5" y=".5" width="11" height="11" fill="none" stroke="#000" /></svg>
        </CaptionButton>
        <CaptionButton aria-label="Close">
          <svg width="12" height="12"><path d="M0 0l12 12M12 0L0 12" stroke="#000" /></svg>
        </CaptionButton>
      </TitleBar>
      <MenuBar>
        {["File", "Edit", "View", "Help"].map((m) => (
          <MenuButton key={m}>{m}</MenuButton>
        ))}
      </MenuBar>

      <Workspace>
        <Column>
          <DeviceStrip>
            <DeviceTab>CYW20829B0LKML</DeviceTab>
            <StripRule />
          </DeviceStrip>
          <DevicePage>
            <TabStrip>
              <Tab $w={100}>Peripherals</Tab>
              <Tab $w={54}>Pins</Tab>
              <Tab $w={81} $active>System</Tab>
              <Tab $w={142}>Peripheral-Clocks</Tab>
              <Tab $w={63}>DMA</Tab>
              <StripRule />
            </TabStrip>
            <Pane>
              <ToolRow>
                <FilterBox>
                  <FilterInput aria-label="Filter resources" placeholder="Enter filter text..." />
                  <Eraser />
                </FilterBox>
                <ToolButton aria-label="Filter"><Funnel /></ToolButton>
                <ToolButton aria-label="Collapse all"><Squares /></ToolButton>
                <ToolButton aria-label="Expand all"><Squares plus /></ToolButton>
                <ToolRule />
                <ToolButton aria-label="Cut"><Cut /></ToolButton>
                <ToolButton aria-label="Copy"><Copy /></ToolButton>
                <ToolButton aria-label="Paste"><Paste /></ToolButton>
                <ToolRule />
                <ToolButton aria-label="Zoom in"><Magnifier plus /></ToolButton>
                <ToolButton aria-label="Zoom out"><Magnifier /></ToolButton>
                <ToolButton aria-label="Zoom to fit"><Fit /></ToolButton>
              </ToolRow>
              <Split>
                <TreeFrame>
                  <Viewport>
                    <Grid>
                      <colgroup>
                        <col style={{ width: 224 }} />
                        <col style={{ width: 194 }} />
                        <col />
                      </colgroup>
                      <thead>
                        <tr>
                          <HeadCell $h={30} $rule>Resource</HeadCell>
                          <HeadCell $h={30} $rule>Name(s)</HeadCell>
                          <HeadCell $h={30}>Personality</HeadCell>
                        </tr>
                      </thead>
                      <tbody>
                        {resources.map((r) => (
                          <ResourceRow key={r.label} r={r} />
                        ))}
                      </tbody>
                    </Grid>
                  </Viewport>
                  <ScrollBar thumb={475} rest={116} />
                  <ScrollBar row thumb={244} rest={173} />
                  <Corner />
                </TreeFrame>
                <Canvas>
                  <ClockDiagram />
                </Canvas>
              </Split>
            </Pane>
          </DevicePage>
        </Column>

        <Dock>
          <DockHeader name="Power - Parameters" />
          <ParamTools>
            <FilterBox>
              <FilterInput aria-label="Filter parameters" placeholder="Enter filter text..." />
              <Eraser />
            </FilterBox>
            <ToolButton aria-label="Reset"><Refresh /></ToolButton>
            <ToolRule />
            <ToolButton aria-label="Collapse all"><Squares /></ToolButton>
            <ToolButton aria-label="Expand all"><Squares plus /></ToolButton>
          </ParamTools>
          <ParamFrame>
            <Viewport>
              <Grid>
                <colgroup>
                  <col style={{ width: 319 }} />
                  <col />
                </colgroup>
                <thead>
                  <tr>
                    <HeadCell $h={29} $rule>Name</HeadCell>
                    <HeadCell $h={29}>Value</HeadCell>
                  </tr>
                </thead>
                <tbody>
                  {params.map((p, i) => (
                    <ParamRow key={p.label} p={p} i={i} />
                  ))}
                </tbody>
              </Grid>
            </Viewport>
            <ScrollBar thumb={574} rest={24} />
            <ScrollBar row thumb={615} rest={68} />
            <Corner />
          </ParamFrame>
          <ParamTabs>
            <ParamTab $w={159} $active>Power - Parameters</ParamTab>
            <ParamTab $w={117}>Code Preview</ParamTab>
          </ParamTabs>
          <Popup role="listbox" aria-label="System Idle Power Mode">
            {modes.map((m) => (
              <PopupItem key={m} role="option" aria-selected={m === modes[2]} $active={m === modes[2]}>
                {m}
              </PopupItem>
            ))}
          </Popup>
          <Highlight />
        </Dock>
      </Workspace>

      <NoticeDock>
        <DockHeader name="Notice List" />
        <NoticeTools>
          <NoticeToggle $w={100}>
            <ErrorIcon />
            <NoticeLabel>0 Errors</NoticeLabel>
          </NoticeToggle>
          <NoticeToggle $w={122} $on>
            <WarningIcon />
            <NoticeLabel>0 Warnings</NoticeLabel>
          </NoticeToggle>
          <NoticeToggle $w={94} $on>
            <TaskIcon />
            <NoticeLabel>0 Tasks</NoticeLabel>
          </NoticeToggle>
          <NoticeToggle $w={93} $on>
            <InfoIcon />
            <NoticeLabel>0 Infos</NoticeLabel>
          </NoticeToggle>
        </NoticeTools>
        <NoticeFrame>
          <Grid>
            <colgroup>
              <col style={{ width: 16 }} />
              <col style={{ width: 30 }} />
              <col />
              <col style={{ width: 70 }} />
            </colgroup>
            <thead>
              <tr>
                <HeadCell $h={30} $rule />
                <HeadCell $h={30} $rule>Fix</HeadCell>
                <SortHead $h={30} $rule>
                  Description
                  <SortMark><Chevron s={8} /></SortMark>
                </SortHead>
                <HeadCell $h={30} $rule>Location</HeadCell>
              </tr>
            </thead>
          </Grid>
        </NoticeFrame>
      </NoticeDock>
      <StatusBar>
        <span>Ready</span>
        <Grip />
      </StatusBar>
    </Shell>
  );
}
